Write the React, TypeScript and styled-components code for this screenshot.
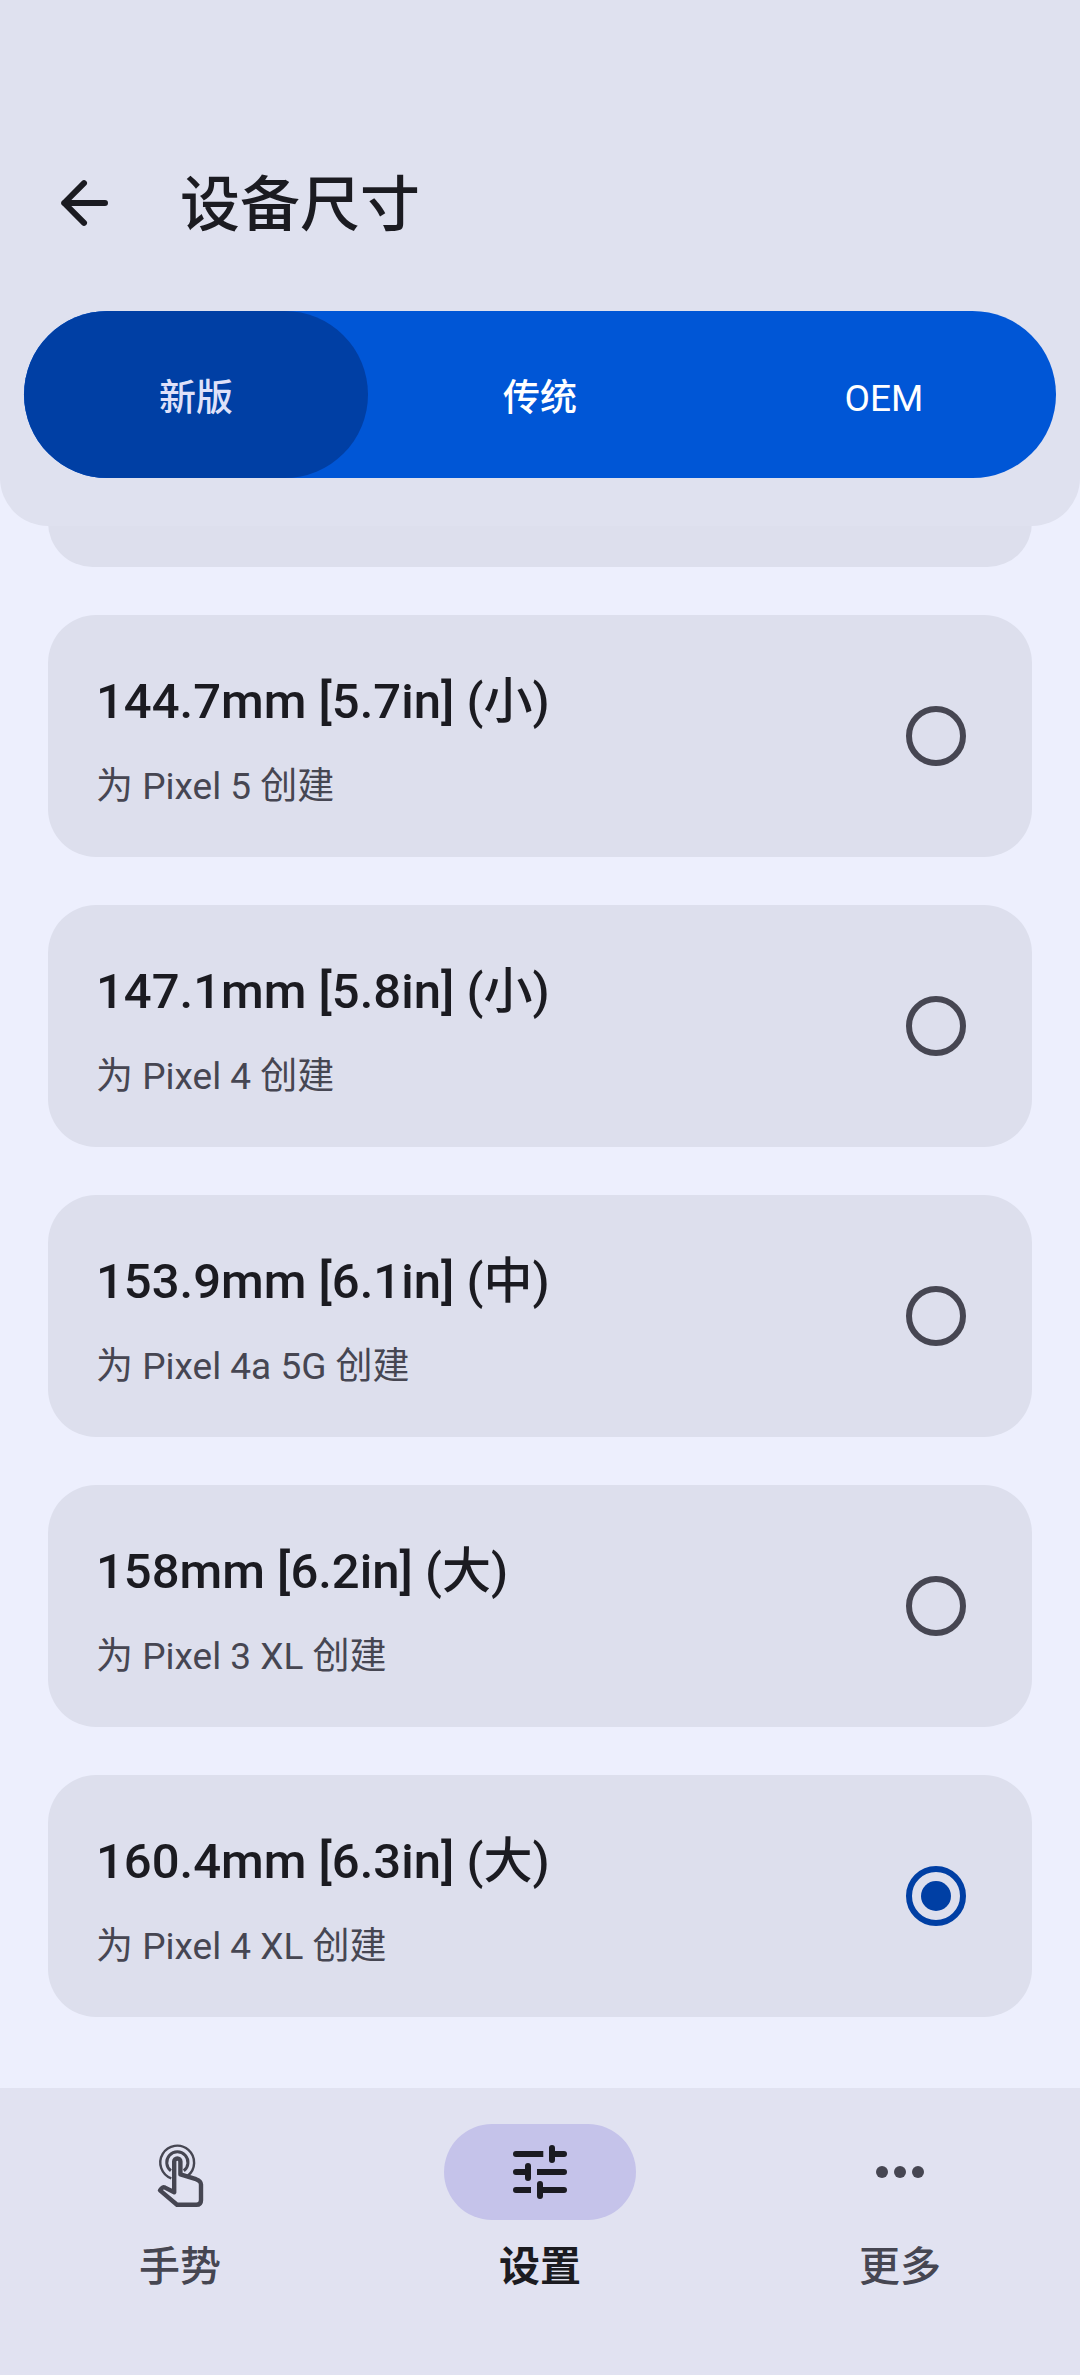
import React, { useState } from "react";
import styled, { createGlobalStyle } from "styled-components";

const GlobalStyle = createGlobalStyle`
  *, *::before, *::after { box-sizing: border-box; }
  html, body { margin: 0; background: #edeffd; }
  body, button, input {
    font-family: Roboto, "Noto Sans CJK SC", sans-serif;
  }
`;

const Screen = styled.div`
  min-height: 100vh;
  display: flex;
  flex-direction: column;
  background: #edeffd;
  color: #1b1b21;
`;

const Header = styled.header`
  position: relative;
  z-index: 1;
  display: flex;
  flex-direction: column;
  gap: 48px;
  padding: 143px 24px 48px;
  background: #dfe1ef;
  border-radius: 0 0 48px 48px;
`;

const TitleRow = styled.div`
  display: flex;
  align-items: center;
  gap: 60px;
  height: 120px;
  padding: 0 24px;
`;

const PlainButton = styled.button`
  padding: 0;
  border: 0;
  background: none;
  color: inherit;
  cursor: pointer;
`;

const BackButton = styled(PlainButton)`
  width: 72px;
  height: 72px;
`;

const Icon = styled.svg`
  display: block;
  width: 72px;
  height: 72px;
`;

const Title = styled.h1`
  margin: 0;
  padding-top: 6px;
  font-size: 60px;
  line-height: 72px;
  font-weight: 500;
`;

const Tabs = styled.div`
  display: grid;
  grid-template-columns: repeat(3, 1fr);
  height: 167px;
  border-radius: 84px;
  background: #0056d6;
`;

const Tab = styled(PlainButton)<{ $active: boolean; $weight: number }>`
  padding-top: 8px;
  border-radius: 84px;
  background: ${(p) => (p.$active ? "#003fa4" : "transparent")};
  color: ${(p) => (p.$active ? "#dfe1f9" : "#ffffff")};
  font-size: 37px;
  line-height: 48px;
  font-weight: ${(p) => p.$weight};
`;

const List = styled.main`
  flex: 1;
  display: flex;
  flex-direction: column;
  gap: 48px;
  margin-top: -48px;
  padding: 0 48px 71px;
`;

const PassedCard = styled.div`
  height: 89px;
  border-radius: 48px;
  background: #dddfed;
`;

const Card = styled.label`
  display: flex;
  align-items: center;
  justify-content: space-between;
  padding: 48px 66px 48px 48px;
  border-radius: 48px;
  background: #dddfed;
  cursor: pointer;
`;

const CardText = styled.span`
  display: flex;
  flex-direction: column;
  gap: 27px;
  padding-top: 3px;
`;

const CardTitle = styled.span`
  font-size: 49px;
  line-height: 72px;
  font-weight: 500;
`;

const CardNote = styled.span`
  font-size: 37px;
  line-height: 44px;
  color: #464652;
`;

const Radio = styled.input`
  appearance: none;
  flex: none;
  display: grid;
  place-items: center;
  width: 60px;
  height: 60px;
  margin: 0;
  border: 6px solid #464652;
  border-radius: 50%;

  &:checked { border-color: #003fa4; }
  &:checked::before {
    content: "";
    width: 30px;
    height: 30px;
    border-radius: 50%;
    background: #003fa4;
  }
`;

const Nav = styled.nav`
  display: grid;
  grid-template-columns: repeat(3, 1fr);
  padding: 36px 0 84px;
  background: #e1e2f1;
`;

const NavItem = styled(PlainButton)<{ $active: boolean }>`
  display: flex;
  flex-direction: column;
  align-items: center;
  gap: 23px;
  color: ${(p) => (p.$active ? "#1b1b21" : "#464652")};
  font-size: 41px;
  line-height: 48px;
  font-weight: ${(p) => (p.$active ? 700 : 500)};
`;

const Pill = styled.span<{ $active: boolean }>`
  display: flex;
  align-items: center;
  justify-content: center;
  width: 192px;
  height: 96px;
  border-radius: 48px;
  background: ${(p) => (p.$active ? "#c5c3ea" : "transparent")};
`;

const BackIcon = () => (
  <Icon viewBox="0 0 24 24" fill="none" stroke="currentColor" strokeWidth="2" strokeLinecap="round" strokeLinejoin="round" aria-hidden="true">
    <path d="M19 12H5.4M12 5.4L5.4 12L12 18.6" />
  </Icon>
);

const GestureIcon = () => (
  <Icon viewBox="0 0 72 72" fill="none" stroke="currentColor" strokeLinejoin="round" aria-hidden="true">
    <path strokeWidth="2.4" d="M27.3 42.4A16.9 16.9 0 1 1 43.6 39.9" />
    <path strokeWidth="3" d="M26.9 34.8A10.6 10.6 0 1 1 39.8 34.8" />
    <path
      strokeWidth="4.4"
      d="M30.2 56.2V25.6a3.1 3.1 0 0 1 6.2 0V38.4L52 43.2Q57 45 57 48.6V64.2q0 4.6 -4.6 4.6H33L16 54.4L17.8 52.2q1.4-1.4 3.2-.6Z"
    />
  </Icon>
);

const TuneIcon = () => (
  <Icon viewBox="0 0 24 24" fill="none" stroke="currentColor" strokeWidth="2" aria-hidden="true">
    <path strokeLinecap="round" d="M16 4v4M16 6h4M8 10v4M4 12h4M12 16v4M12 18h8M4 6h4M20 12h-4M4 18h2" />
    <path d="M7 6h6.1M17 12h-6M5 18h4" />
  </Icon>
);

const MoreIcon = () => (
  <Icon viewBox="0 0 24 24" fill="currentColor" aria-hidden="true">
    <circle cx="6" cy="12" r="2" />
    <circle cx="12" cy="12" r="2" />
    <circle cx="18" cy="12" r="2" />
  </Icon>
);

const tabs = [
  { name: "新版", weight: 500 },
  { name: "传统", weight: 500 },
  { name: "OEM", weight: 400 },
];

const sizes = [
  { title: "144.7mm [5.7in] (小)", note: "为 Pixel 5 创建" },
  { title: "147.1mm [5.8in] (小)", note: "为 Pixel 4 创建" },
  { title: "153.9mm [6.1in] (中)", note: "为 Pixel 4a 5G 创建" },
  { title: "158mm [6.2in] (大)", note: "为 Pixel 3 XL 创建" },
  { title: "160.4mm [6.3in] (大)", note: "为 Pixel 4 XL 创建" },
];

const navItems = [
  { label: "手势", icon: <GestureIcon /> },
  { label: "设置", icon: <TuneIcon /> },
  { label: "更多", icon: <MoreIcon /> },
];

export default function App() {
  const [tab, setTab] = useState(0);
  const [size, setSize] = useState(4);
  const [page, setPage] = useState(1);

  return (
    <Screen lang="zh-CN">
      <GlobalStyle />
      <Header>
        <TitleRow>
          <BackButton type="button" aria-label="返回">
            <BackIcon />
          </BackButton>
          <Title>设备尺寸</Title>
        </TitleRow>
        <Tabs role="tablist">
          {tabs.map((t, i) => (
            <Tab key={t.name} type="button" role="tab" aria-selected={tab === i} $active={tab === i} $weight={t.weight} onClick={() => setTab(i)}>
              {t.name}
            </Tab>
          ))}
        </Tabs>
      </Header>
      <List>
        <PassedCard />
        {sizes.map((s, i) => (
          <Card key={s.title}>
            <CardText>
              <CardTitle>{s.title}</CardTitle>
              <CardNote>{s.note}</CardNote>
            </CardText>
            <Radio type="radio" name="size" checked={size === i} onChange={() => setSize(i)} />
          </Card>
        ))}
      </List>
      <Nav>
        {navItems.map((n, i) => (
          <NavItem key={n.label} type="button" $active={page === i} onClick={() => setPage(i)}>
            <Pill $active={page === i}>{n.icon}</Pill>
            {n.label}
          </NavItem>
        ))}
      </Nav>
    </Screen>
  );
}
